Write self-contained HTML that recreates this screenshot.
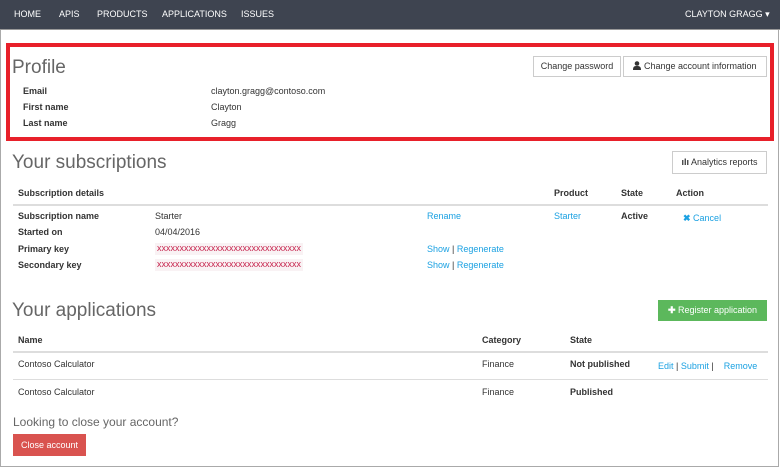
<!DOCTYPE html>
<html><head><style>
*{margin:0;padding:0;box-sizing:border-box}
body{width:780px;height:468px;background:#fff;font-family:"Liberation Sans",sans-serif;color:#333;position:relative;overflow:hidden;font-size:9px}
.a{position:absolute;white-space:nowrap}
.frame{position:absolute;left:0;top:0;width:779px;height:467px;border:1px solid #aaa;border-top:none}
.nav{position:absolute;left:0;top:0;width:780px;height:30px;background:#3e4450;border-bottom:1px solid #999}
.nav span{position:absolute;top:9px;color:#fff;font-size:9px}
.red{position:absolute;left:6px;top:43px;width:768px;height:98px;border:4px solid #e8202a}
.h{font-size:19px;font-weight:normal;color:#666}
.btn{position:absolute;border:1px solid #ccc;background:#fff;font-size:9px;color:#333;text-align:center}
.b{font-weight:bold}
.l{color:#1ba1e2}
.key{background:#f9f2f4;color:#c7254e;padding:0 2px}
.line{position:absolute;height:2px;background:#ddd}
.line1{position:absolute;height:1px;background:#ddd}
</style></head><body>
<div class="frame"></div>
<div class="nav">
<span style="left:14px">HOME</span><span style="left:59px">APIS</span><span style="left:97px">PRODUCTS</span><span style="left:162px">APPLICATIONS</span><span style="left:241px">ISSUES</span>
<span style="left:685px">CLAYTON GRAGG ▾</span>
</div>
<div class="red"></div>
<div class="a h" style="left:12px;top:57px">Profile</div>
<div class="btn" style="left:533px;top:56px;width:88px;height:21px;line-height:19px">Change password</div>
<div class="btn" style="left:623px;top:56px;width:144px;height:21px;line-height:19px"><svg width="8" height="9" viewBox="0 0 8 9" style="vertical-align:-1px"><circle cx="4" cy="2.5" r="2.3" fill="#333"/><path d="M0 9 C0 5.5 1.5 5 4 5 C6.5 5 8 5.5 8 9Z" fill="#333"/></svg> Change account information</div>
<div class="a b" style="left:23px;top:86px">Email</div><div class="a" style="left:211px;top:86px">clayton.gragg@contoso.com</div>
<div class="a b" style="left:23px;top:102px">First name</div><div class="a" style="left:211px;top:102px">Clayton</div>
<div class="a b" style="left:23px;top:118px">Last name</div><div class="a" style="left:211px;top:118px">Gragg</div>

<div class="a h" style="left:12px;top:152px">Your subscriptions</div>
<div class="btn" style="left:672px;top:151px;width:95px;height:23px;line-height:21px"><b>ılı</b> Analytics reports</div>
<div class="a b" style="left:18px;top:188px">Subscription details</div>
<div class="a b" style="left:554px;top:188px">Product</div>
<div class="a b" style="left:621px;top:188px">State</div>
<div class="a b" style="left:676px;top:188px">Action</div>
<div class="line" style="left:13px;top:204px;width:755px"></div>
<div class="a b" style="left:18px;top:211px">Subscription name</div><div class="a" style="left:155px;top:211px">Starter</div>
<div class="a l" style="left:427px;top:211px">Rename</div><div class="a l" style="left:554px;top:211px">Starter</div>
<div class="a b" style="left:621px;top:211px">Active</div><div class="a l" style="left:683px;top:213px"><b>✖</b> Cancel</div>
<div class="a b" style="left:18px;top:227px">Started on</div><div class="a" style="left:155px;top:227px">04/04/2016</div>
<div class="a b" style="left:18px;top:244px">Primary key</div><div class="a key" style="left:155px;top:243px;width:148px;height:12px;overflow:hidden">xxxxxxxxxxxxxxxxxxxxxxxxxxxxxxxx</div>
<div class="a" style="left:427px;top:244px"><span class="l">Show</span> | <span class="l">Regenerate</span></div>
<div class="a b" style="left:18px;top:260px">Secondary key</div><div class="a key" style="left:155px;top:259px;width:148px;height:12px;overflow:hidden">xxxxxxxxxxxxxxxxxxxxxxxxxxxxxxxx</div>
<div class="a" style="left:427px;top:260px"><span class="l">Show</span> | <span class="l">Regenerate</span></div>

<div class="a h" style="left:12px;top:300px">Your applications</div>
<div class="a" style="left:658px;top:300px;width:109px;height:21px;background:#5cb85c;color:#fff;line-height:21px;text-align:center"><b>✚</b> Register application</div>
<div class="a b" style="left:18px;top:335px">Name</div><div class="a b" style="left:482px;top:335px">Category</div><div class="a b" style="left:570px;top:335px">State</div>
<div class="line" style="left:13px;top:351px;width:755px"></div>
<div class="a" style="left:18px;top:359px">Contoso Calculator</div><div class="a" style="left:482px;top:359px">Finance</div><div class="a b" style="left:570px;top:359px">Not published</div>
<div class="a" style="left:658px;top:361px"><span class="l">Edit</span> | <span class="l">Submit</span> | &nbsp;&nbsp;&nbsp;<span class="l">Remove</span></div>
<div class="line1" style="left:13px;top:379px;width:755px"></div>
<div class="a" style="left:18px;top:387px">Contoso Calculator</div><div class="a" style="left:482px;top:387px">Finance</div><div class="a b" style="left:570px;top:387px">Published</div>

<div class="a" style="left:13px;top:415px;font-size:12px;color:#666">Looking to close your account?</div>
<div class="a" style="left:13px;top:434px;width:73px;height:22px;background:#d9534f;color:#fff;line-height:22px;text-align:center">Close account</div>
</body></html>
